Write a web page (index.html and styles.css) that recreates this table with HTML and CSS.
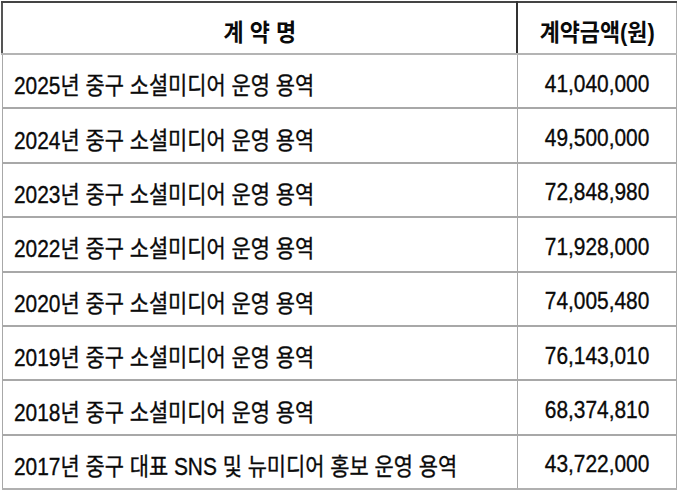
FILE: index.html
```html
<!DOCTYPE html>
<html lang="ko">
<head>
<meta charset="utf-8">
<link rel="stylesheet" href="styles.css">
</head>
<body>
<div class="wrap">
<table class="contracts">
  <thead>
    <tr>
      <th class="name-h"><span class="t">계 약 명</span></th>
      <th class="amt-h"><span class="t">계약금액(원)</span></th>
    </tr>
  </thead>
  <tbody>
    <tr><td class="name"><span class="t">2025년 중구 소셜미디어 운영 용역</span></td><td class="amt"><span class="t">41,040,000</span></td></tr>
    <tr><td class="name"><span class="t">2024년 중구 소셜미디어 운영 용역</span></td><td class="amt"><span class="t">49,500,000</span></td></tr>
    <tr><td class="name"><span class="t">2023년 중구 소셜미디어 운영 용역</span></td><td class="amt"><span class="t">72,848,980</span></td></tr>
    <tr><td class="name"><span class="t">2022년 중구 소셜미디어 운영 용역</span></td><td class="amt"><span class="t">71,928,000</span></td></tr>
    <tr><td class="name"><span class="t">2020년 중구 소셜미디어 운영 용역</span></td><td class="amt"><span class="t">74,005,480</span></td></tr>
    <tr><td class="name"><span class="t">2019년 중구 소셜미디어 운영 용역</span></td><td class="amt"><span class="t">76,143,010</span></td></tr>
    <tr><td class="name"><span class="t">2018년 중구 소셜미디어 운영 용역</span></td><td class="amt"><span class="t">68,374,810</span></td></tr>
    <tr><td class="name"><span class="t">2017년 중구 대표 SNS 및 뉴미디어 홍보 운영 용역</span></td><td class="amt"><span class="t">43,722,000</span></td></tr>
  </tbody>
</table>
</div>
</body>
</html>
```
FILE: styles.css
```css
html, body {
  margin: 0;
  padding: 0;
  background: #fff;
}
.wrap {
  padding: 1px 0 0 1px;
}
.contracts {
  border-collapse: collapse;
  width: 676px;
  table-layout: fixed;
  font-family: "Liberation Sans", "Noto Sans CJK KR", sans-serif;
  font-size: 24px;
  color: #0a0a0a;
}
.contracts th, .contracts td {
  padding: 0;
  white-space: nowrap;
  overflow: visible;
}
.contracts thead th {
  height: 52px;
  border-top: 2px solid #444;
  border-bottom: 2px solid #b4b4b4;
  font-weight: bold;
  vertical-align: middle;
  padding-top: 4px;
  box-sizing: border-box;
}
.name-h {
  width: 515px;
  border-left: 2px solid #555;
  border-right: 2px solid #333;
  text-align: center;
}
.amt-h {
  border-right: 1px solid #b0b0b0;
  text-align: center;
}
.contracts tbody td {
  height: 54.4px;
  border: 1px solid #a8a8a8;
  border-width: 2px 1px 1px 1px;
  vertical-align: middle;
  padding-top: 5px;
  box-sizing: border-box;
  -webkit-text-stroke: 0.35px #0a0a0a;
}
.contracts tbody tr:last-child td {
  border-bottom: 2px solid #b0b0b0;
}
.name {
  text-align: left;
  padding-left: 11px !important;
}
.amt {
  text-align: center;
}
.t {
  display: inline-block;
  transform: scaleX(0.87);
}
th .t {
  transform: scaleX(0.91);
}
.name .t {
  transform-origin: left center;
}
.amt .t, th .t {
  transform-origin: center center;
}
```
